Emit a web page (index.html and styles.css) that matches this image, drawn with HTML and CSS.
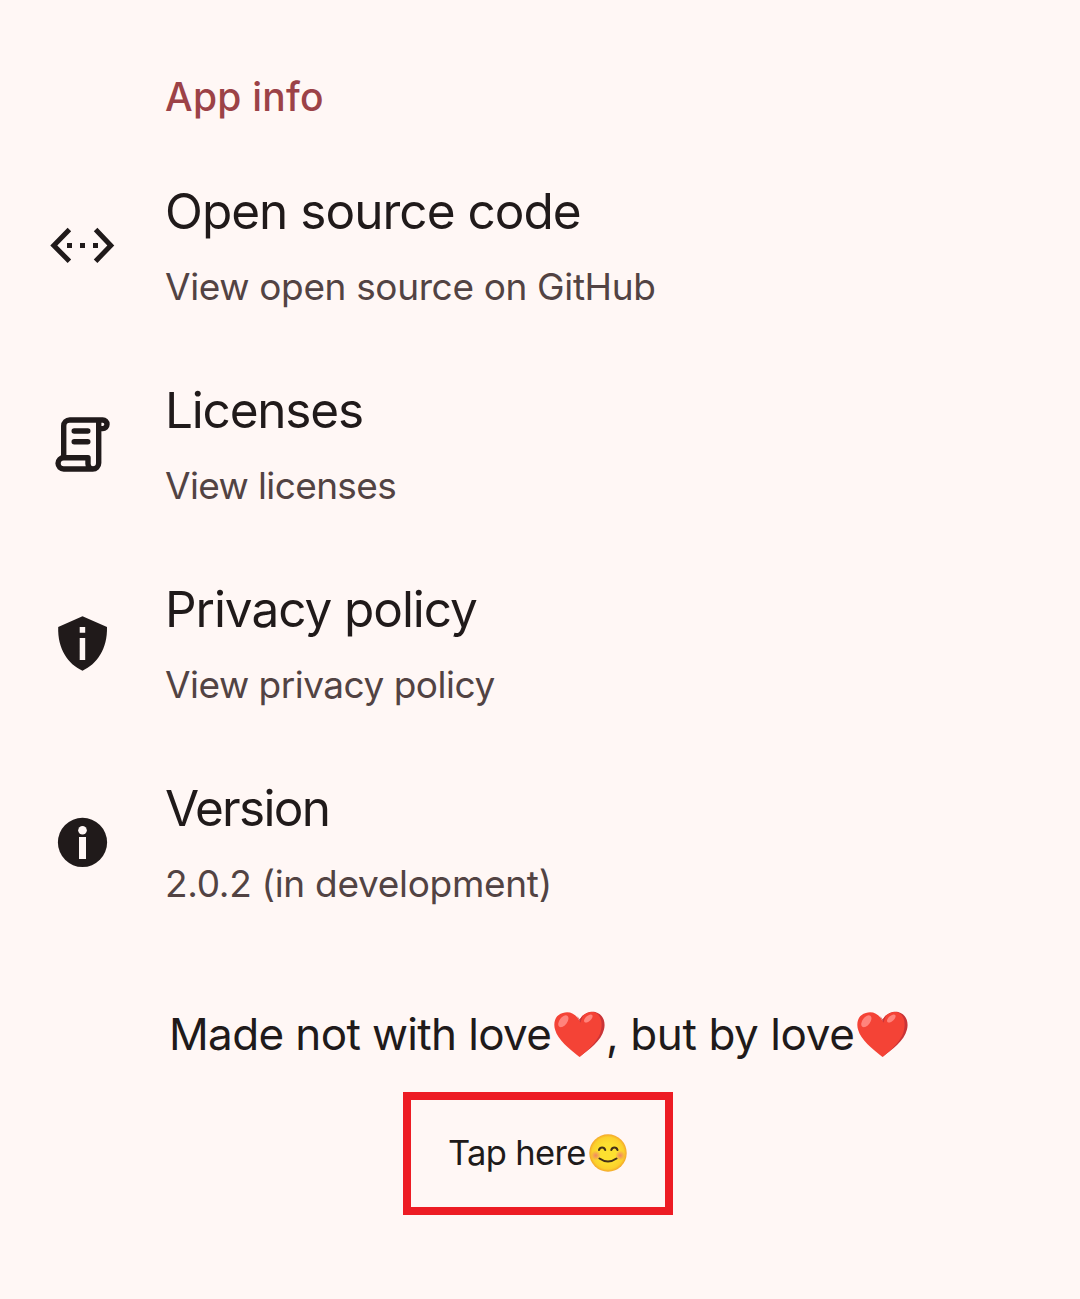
FILE: index.html
```html
<!DOCTYPE html>
<html lang="en">
<head>
<meta charset="utf-8">
<meta name="viewport" content="width=device-width">
<title>App info</title>
<link rel="stylesheet" href="styles.css">
</head>
<body>
<main>
  <h1 class="section-title">App info</h1>
  <ul class="list">
    <li class="row">
      <svg class="icon" viewBox="0 0 66 66" aria-hidden="true">
        <path class="line" d="M19.4 17.5 3.8 33.4l15.6 15.9M45.6 17.5l15.2 15.9-15.2 15.9"/>
        <path d="M17 31h5v5h-5zM30 31h5v5h-5zM43 31h5v5h-5z"/>
      </svg>
      <div class="text"><div class="title t-source">Open source code</div><div class="sub s-source">View open source on GitHub</div></div>
    </li>
    <li class="row">
      <svg class="icon" viewBox="0 0 66 66" aria-hidden="true">
        <path class="line round" d="M13.7 46.7V15a6 6 0 0 1 6-6h33a4.3 4.3 0 1 1 0 8.6h-4M48.7 11v41a6 6 0 0 1-6 6h-29a5.65 5.65 0 0 1 0-11.3H38V53a5 5 0 0 0 5 5M24.2 20h13.6M24.2 30.7h13.6"/>
      </svg>
      <div class="text"><div class="title t-lic">Licenses</div><div class="sub s-lic">View licenses</div></div>
    </li>
    <li class="row">
      <svg class="icon" viewBox="0 0 66 66" aria-hidden="true">
        <path fill-rule="evenodd" d="M32.5 6.3 57 17C57.5 39 47 54 32.5 60.7 18 54 7.500 39 8.200 17zM29.700 17v5.700h5.500V17zM29.700 28v22h5.500V28z"/>
      </svg>
      <div class="text"><div class="title t-priv">Privacy policy</div><div class="sub s-priv">View privacy policy</div></div>
    </li>
    <li class="row">
      <svg class="icon" viewBox="0 0 66 66" aria-hidden="true">
        <circle cx="32.500" cy="33.400" r="24.600"/>
        <circle class="cut" cx="32.500" cy="21.300" r="4.300"/>
        <path class="cut" d="M29 28h7v22h-7z"/>
      </svg>
      <div class="text"><div class="title t-ver">Version</div><div class="sub s-ver">2.0.2 (in development)</div></div>
    </li>
  </ul>
  <p class="made">
    <span class="made-a">Made not with love</span>
    <svg class="heart" viewBox="0 0 52 48" role="img" aria-label="love"><use href="#heart"/></svg>
    <span class="made-b">, but by love</span>
    <svg class="heart" viewBox="0 0 52 48" role="img" aria-label="love">
      <g id="heart">
        <path fill="#c93437" d="M26 9C31 1 38 0 42 1c8 2 11 10 9 18-3 12-15 20-25 28C33 36 44 15 26 9z"/>
        <path fill="#f44336" d="M26 10C22 2 15 0 9 2 1 4-1 12 1 19c3 11 14 19 25 28 10-8 18-16 21-24C50 14 49 5 42 1.500 35-.5 28 4 26 10z"/>
        <path fill="#c93437" d="M23 5q2.500 3 4 7Q28 8 30 4q-2 1.500-3.500 5-1.500-2.500-3.500-4z"/>
        <ellipse cx="9.500" cy="10.500" rx="4" ry="7" transform="rotate(36 9.500 10.500)" fill="#ff847c"/>
        <ellipse cx="35" cy="7.700" rx="2.800" ry="5.300" transform="rotate(48 35 7.700)" fill="#ff847c"/>
      </g>
    </svg>
  </p>
  <button class="tap" type="button">
    <span class="tap-text">Tap here</span>
    <svg class="smile" viewBox="0 0 38 38" role="img" aria-label="smile">
      <defs>
        <radialGradient id="face"><stop offset=".5" stop-color="#fde030"/><stop offset=".85" stop-color="#fbd02c"/><stop offset="1" stop-color="#f4a72b"/></radialGradient>
        <radialGradient id="blush"><stop offset="0" stop-color="#ed7770" stop-opacity=".85"/><stop offset="1" stop-color="#ed7770" stop-opacity="0"/></radialGradient>
      </defs>
      <circle cx="19" cy="19" r="18.700" fill="url(#face)"/>
      <circle cx="6.800" cy="21.500" r="5" fill="url(#blush)"/>
      <circle cx="31.200" cy="21.500" r="5" fill="url(#blush)"/>
      <path d="M10 16c1-3.300 5.200-3.300 6.200 0M22.300 16c1-3.300 5.200-3.300 6.200 0M10.500 24.500q8.500 6 17 0" fill="none" stroke="#443018" stroke-width="2.100" stroke-linecap="round"/>
    </svg>
  </button>
</main>
</body>
</html>
```
FILE: styles.css
```css
* { box-sizing: border-box; }
body {
  margin: 0;
  background: #fff7f5;
  color: #201a1a;
  font-family: Inter, Roboto, sans-serif;
  white-space: nowrap;
}
main { height: 1299px; padding-top: 66px; }
.section-title {
  margin: 0 0 20px;
  padding-left: 165px;
  color: #9c4247;
  font-size: 39px;
  font-weight: 500;
  letter-spacing: .25px;
  line-height: 61px;
  height: 60px;
}
.list { margin: 0; padding: 0; list-style: none; }
.row { display: flex; align-items: flex-start; height: 199px; padding-left: 50px; }
.icon { flex: none; width: 66px; height: 66px; margin: 66px 49px 0 0; fill: #201a1a; }
.line { fill: none; stroke: #201a1a; stroke-width: 5; }
.round { stroke-width: 5.4; stroke-linecap: round; stroke-linejoin: round; }
.cut { fill: #fff7f5; }
.text { padding-top: 31px; }
.title { font-size: 49.5px; line-height: 68px; }
.sub { margin-top: 8px; color: #524343; font-size: 37px; line-height: 68px; }
.t-source { letter-spacing: -.97px; }
.t-lic { letter-spacing: -1.2px; }
.t-priv { letter-spacing: -1.05px; }
.t-ver { letter-spacing: -1.7px; }
.s-source { letter-spacing: -.36px; }
.s-lic { letter-spacing: -.62px; }
.s-priv { letter-spacing: -.5px; }
.s-ver { letter-spacing: -.3px; }
.made {
  display: flex;
  align-items: center;
  margin: 60px 0 26px 169px;
  height: 64px;
  font-size: 44px;
  line-height: 64px;
}
.made-a { width: 385px; letter-spacing: -.63px; }
.made-b { width: 251px; letter-spacing: -.4px; }
.heart { flex: none; width: 51px; height: 47px; margin-right: 1px; }
.tap {
  display: flex;
  align-items: center;
  width: 270px;
  height: 123px;
  margin-left: 403px;
  padding: 0 0 2px 37px;
  border: 8px solid #ed1c24;
  background: none;
  color: inherit;
  font: 400 34.5px/50px Inter, Roboto, sans-serif;
}
.tap-text { width: 141px; text-align: left; letter-spacing: -.65px; }
.smile { flex: none; width: 38px; height: 38px; }
```
